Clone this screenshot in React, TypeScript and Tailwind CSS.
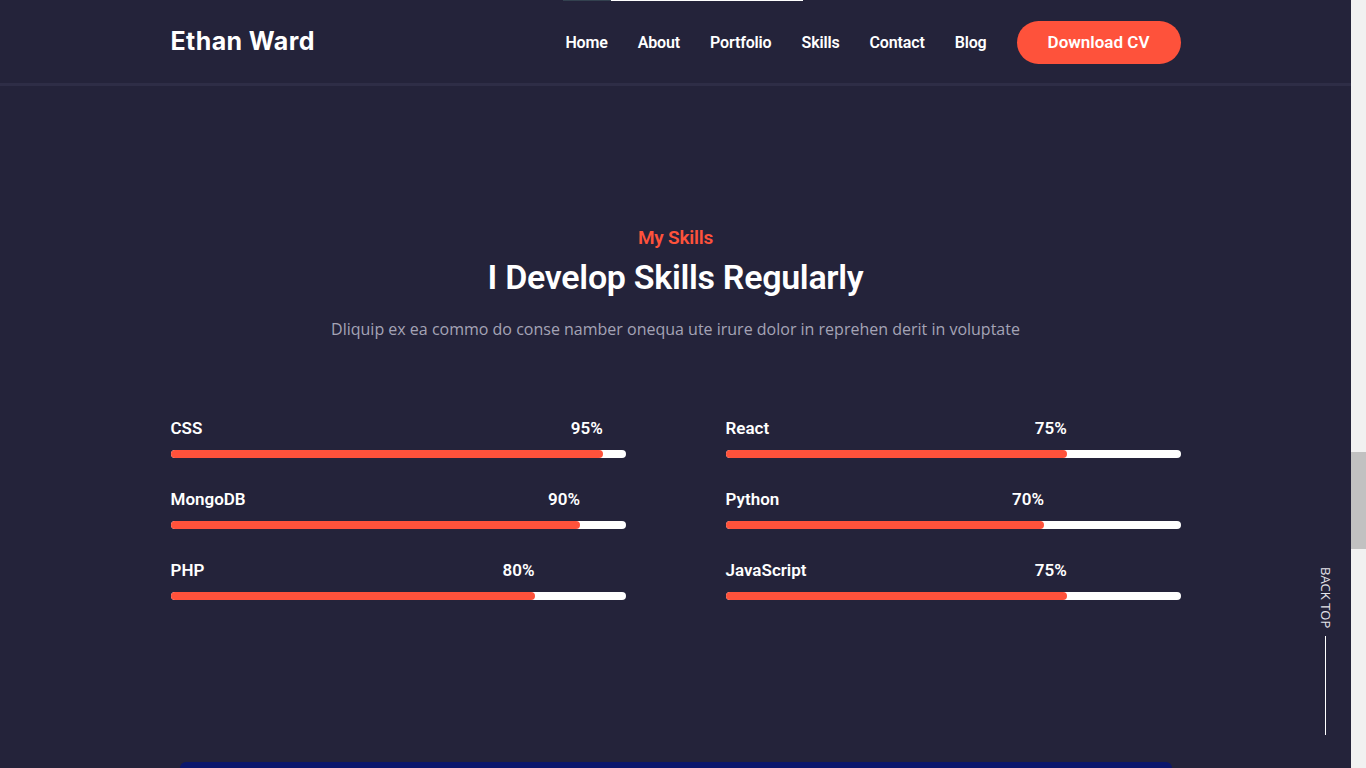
import React from "react";

const skills = [
  { name: "CSS", value: 95 },
  { name: "React", value: 75 },
  { name: "MongoDB", value: 90 },
  { name: "Python", value: 70 },
  { name: "PHP", value: 80 },
  { name: "JavaScript", value: 75 },
];

const navLinks = ["Home", "About", "Portfolio", "Skills", "Contact", "Blog"];

const SkillBar: React.FC<{ name: string; value: number }> = ({ name, value }) => {
  return (
    <div className="mb-[29px]">
      <div className="grid text-[17px] leading-6 font-semibold text-white">
        <span className="col-start-1 row-start-1">{name}</span>
        <span
          className="col-start-1 row-start-1 text-right"
          style={{ width: `${value}%` }}
        >
          {value}%
        </span>
      </div>
      <div className="mt-[10px] h-2 w-full rounded-full bg-white">
        <div
          className="h-2 rounded-full bg-[#fe523b]"
          style={{ width: `${value}%` }}
        />
      </div>
    </div>
  );
};

const App: React.FC = () => {
  return (
    <div className="flex h-[768px] w-[1366px] overflow-hidden bg-[#24233a]">
      <div className="relative flex-1 font-['Roboto',sans-serif]">
        {/* scroll progress line */}
        <div className="absolute left-[563px] top-0 flex h-px">
          <div className="w-[48px] bg-[#33414f]" />
          <div className="w-[192px] bg-white" />
        </div>

        <header className="h-[86px] border-b-[3px] border-[#2e2d46]">
          <div className="mx-auto flex h-full w-[1010px] items-center justify-between pt-px">
            <a className="font-['Inter',sans-serif] text-[25px] font-bold tracking-[0.4px] text-white">
              Ethan Ward
            </a>
            <nav className="flex items-center">
              <ul className="mr-[30px] flex items-center gap-[30px] pt-[2px] text-[16px] font-semibold tracking-[-0.15px] text-white">
                {navLinks.map((l) => (
                  <li key={l}>{l}</li>
                ))}
              </ul>
              <button className="h-[43px] w-[164px] rounded-full bg-[#fe523b] pt-px text-[17px] font-semibold text-white">
                Download CV
              </button>
            </nav>
          </div>
        </header>

        <section className="mx-auto w-[1010px] pt-[140px]">
          <div className="text-center">
            <p className="text-[19px] font-semibold leading-6 tracking-[-0.2px] text-[#fe523b]">My Skills</p>
            <h2 className="mt-[5px] text-[34px] font-semibold leading-[44px] tracking-[-0.3px] text-white">
              I Develop Skills Regularly
            </h2>
            <p className="mt-[18px] font-['Open_Sans',sans-serif] text-[16px] leading-6 text-[#a4a3b6]">
              Dliquip ex ea commo do conse namber onequa ute irure dolor in reprehen derit in voluptate
            </p>
          </div>

          <div className="mt-[75px] grid grid-cols-2 gap-x-[100px]">
            {skills.map((s) => (
              <SkillBar key={s.name} name={s.name} value={s.value} />
            ))}
          </div>
        </section>

        <div className="mx-auto mt-[133px] h-[6px] w-[992px] rounded-t-[10px] bg-[#0b176c]" />

        {/* back to top */}
        <div className="absolute right-[19px] top-[567px] flex flex-col items-center">
          <span className="font-['Open_Sans',sans-serif] text-[13px] leading-none text-[#e4e4ea] [writing-mode:vertical-rl]">
            BACK TOP
          </span>
          <span className="mt-[8px] h-[99px] w-px bg-white" />
        </div>
      </div>

      {/* scrollbar */}
      <div className="w-[15px] bg-[#f1f1f1] pt-[452px]">
        <div className="mx-auto h-[97px] w-[15px] bg-[#c1c1c1]" />
      </div>
    </div>
  );
};

export default App;
